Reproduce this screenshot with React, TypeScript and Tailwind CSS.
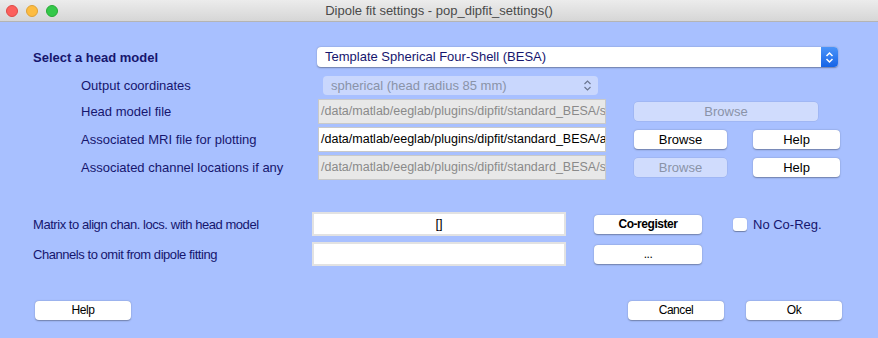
import React from 'react';

const label = 'text-[13px] text-[#16166e] leading-none';
const narrow = 'text-[12px] tracking-[-0.45px]';

function Btn({ children, className = '', disabled = false }: { children: React.ReactNode; className?: string; disabled?: boolean }) {
  return (
    <button
      className={
        'h-[19px] rounded-[4px] leading-none flex items-center justify-center ' +
        (disabled
          ? 'bg-[#d0dcfd] text-[#8a93a8] shadow-[0_0_0_0.5px_rgba(120,140,190,0.35)] '
          : 'bg-white text-black shadow-[0_0.5px_1.5px_rgba(0,0,0,0.35)] ') +
        className
      }
    >
      {children}
    </button>
  );
}

function PathInput({ value, disabled = false }: { value: string; disabled?: boolean }) {
  return (
    <div
      className={
        'w-[288px] h-[25px] flex items-center pl-[2px] overflow-hidden whitespace-nowrap text-[12.5px] border border-[#c9c9c9] ' +
        (disabled ? 'bg-[#e8e8e8] text-[#8a8a8a]' : 'bg-white text-black')
      }
    >
      {value}
    </div>
  );
}

export default function App() {
  return (
    <div className="w-[878px] h-[338px] flex flex-col bg-[#a8c0ff] font-['Liberation_Sans',Arial,sans-serif] overflow-hidden">
      {/* Title bar */}
      <div className="h-[22px] shrink-0 flex items-center relative bg-gradient-to-b from-[#ececec] to-[#d6d6d6] border-b border-[#b4b4b4]">
        <div className="flex items-center gap-[8px] pl-[6px]">
          <span className="w-[12px] h-[12px] rounded-full bg-[#fc605c] border border-[#de4a45]" />
          <span className="w-[12px] h-[12px] rounded-full bg-[#fdbc40] border border-[#dea236]" />
          <span className="w-[12px] h-[12px] rounded-full bg-[#34c84a] border border-[#27aa35]" />
        </div>
        <div className="absolute inset-0 flex items-center justify-center text-[13px] text-[#4a4a4a]">
          Dipole fit settings - pop_dipfit_settings()
        </div>
      </div>

      {/* Head model */}
      <div className="flex items-center h-[20px] mt-[25px]">
        <div className={'w-[317px] pl-[33px] font-bold ' + label}>Select a head model</div>
        <div className="w-[521px] h-[20px] flex bg-white rounded-[4px] shadow-[0_0.5px_1.5px_rgba(0,0,0,0.35)]">
          <div className="flex-1 flex items-center pl-[8px] text-[13px] text-[#16166e]">Template Spherical Four-Shell (BESA)</div>
          <div className="w-[17px] h-[20px] rounded-r-[4px] bg-gradient-to-b from-[#4a94f9] to-[#1463e6] flex items-center justify-center">
            <svg width="9" height="13" viewBox="0 0 9 13" fill="none" stroke="white" strokeWidth="1.5">
              <path d="M1.5 5 L4.5 2 L7.5 5" />
              <path d="M1.5 8 L4.5 11 L7.5 8" />
            </svg>
          </div>
        </div>
      </div>

      <div className="flex items-center h-[19px] mt-[9px]">
        <div className={'w-[323px] pl-[81px] ' + label}>Output coordinates</div>
        <div className="w-[275px] h-[19px] rounded-[4px] bg-[#c9d7fd] flex items-center justify-between pl-[8px] pr-[6px] text-[13px] text-[#8a93a8]">
          <span>spherical (head radius 85 mm)</span>
          <svg width="9" height="13" viewBox="0 0 9 13" fill="none" stroke="#6b7690" strokeWidth="1.2">
            <path d="M1.5 5 L4.5 2 L7.5 5" />
            <path d="M1.5 8 L4.5 11 L7.5 8" />
          </svg>
        </div>
      </div>

      <div className="flex items-center h-[25px] mt-[4px]">
        <div className={'w-[318px] pl-[81px] ' + label}>Head model file</div>
        <PathInput disabled value="/data/matlab/eeglab/plugins/dipfit/standard_BESA/s" />
        <Btn disabled className="ml-[28px] w-[184px] text-[13px]">Browse</Btn>
      </div>

      <div className="flex items-center h-[25px] mt-[3px]">
        <div className={'w-[318px] pl-[81px] ' + label}>Associated MRI file for plotting</div>
        <PathInput value="/data/matlab/eeglab/plugins/dipfit/standard_BESA/a" />
        <Btn className="ml-[28px] w-[93px] text-[13px]">Browse</Btn>
        <Btn className="ml-[26px] w-[87px] text-[13px]">Help</Btn>
      </div>

      <div className="flex items-center h-[25px] mt-[3px]">
        <div className={'w-[318px] pl-[81px] ' + label}>Associated channel locations if any</div>
        <PathInput disabled value="/data/matlab/eeglab/plugins/dipfit/standard_BESA/s" />
        <Btn disabled className="ml-[28px] w-[93px] text-[13px]">Browse</Btn>
        <Btn className="ml-[26px] w-[87px] text-[13px]">Help</Btn>
      </div>

      {/* Coregistration */}
      <div className="flex items-center h-[24px] mt-[32px]">
        <div className={'w-[312px] pl-[33px] ' + label + ' ' + narrow}>Matrix to align chan. locs. with head model</div>
        <div className="w-[254px] h-[24px] bg-white border-2 border-[#e2e2e2] flex items-center justify-center text-[13px] text-black">[]</div>
        <Btn className={'ml-[28px] w-[108px] h-[18px] font-bold ' + narrow}>Co-register</Btn>
        <span className="ml-[31px] w-[14px] h-[13px] rounded-[3px] bg-white shadow-[0_0.5px_1px_rgba(0,0,0,0.35)]" />
        <span className={'ml-[6px] ' + label}>No Co-Reg.</span>
      </div>

      <div className="flex items-center h-[24px] mt-[6px]">
        <div className={'w-[312px] pl-[33px] ' + label + ' ' + narrow}>Channels to omit from dipole fitting</div>
        <div className="w-[254px] h-[24px] bg-white border-2 border-[#e2e2e2]" />
        <Btn className={'ml-[28px] w-[108px] h-[18px] ' + narrow}>...</Btn>
      </div>

      {/* Bottom buttons */}
      <div className="flex items-center h-[18px] mt-[35px]">
        <Btn className={'ml-[35px] w-[96px] h-[18px] ' + narrow}>Help</Btn>
        <Btn className={'ml-[497px] w-[96px] h-[18px] ' + narrow}>Cancel</Btn>
        <Btn className={'ml-[22px] w-[96px] h-[18px] ' + narrow}>Ok</Btn>
      </div>
    </div>
  );
}
